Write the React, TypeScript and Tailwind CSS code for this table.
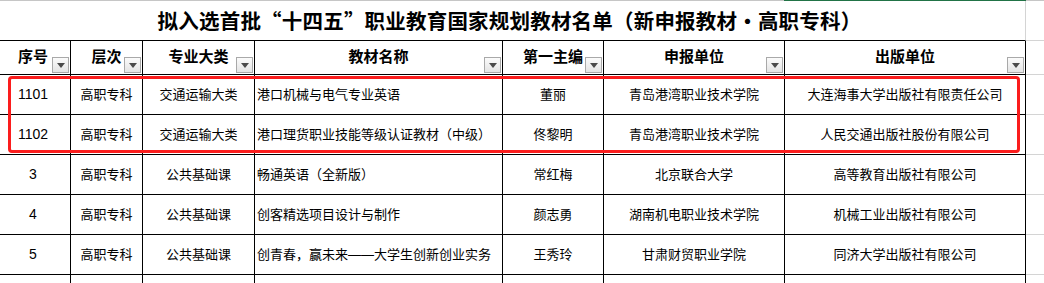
import React from "react";

const COLS = "grid-cols-[70px_72px_112px_248px_101px_181px_242px_1fr]";

const headers = ["序号", "层次", "专业大类", "教材名称", "第一主编", "申报单位", "出版单位"];

const rows: string[][] = [
  ["1101", "高职专科", "交通运输大类", "港口机械与电气专业英语", "董丽", "青岛港湾职业技术学院", "大连海事大学出版社有限责任公司"],
  ["1102", "高职专科", "交通运输大类", "港口理货职业技能等级认证教材（中级）", "佟黎明", "青岛港湾职业技术学院", "人民交通出版社股份有限公司"],
  ["3", "高职专科", "公共基础课", "畅通英语（全新版）", "常红梅", "北京联合大学", "高等教育出版社有限公司"],
  ["4", "高职专科", "公共基础课", "创客精选项目设计与制作", "颜志勇", "湖南机电职业技术学院", "机械工业出版社有限公司"],
  ["5", "高职专科", "公共基础课", "创青春，赢未来——大学生创新创业实务", "王秀玲", "甘肃财贸职业学院", "同济大学出版社有限公司"],
  ["", "", "", "", "", "", ""],
];

function FilterButton() {
  return (
    <span className="absolute right-[1px] bottom-[1px] flex h-[16px] w-[17px] items-center justify-center border border-[#a9a9a9] bg-gradient-to-b from-[#fbfbfb] to-[#e4e4e4]">
      <svg width="8" height="5" viewBox="0 0 8 5">
        <path d="M0 0h8L4 5z" fill="#4a4a4a" />
      </svg>
    </span>
  );
}

function cellClass(i: number) {
  const border = i === 0 ? "" : "border-l border-black";
  const last = i === 6 ? " border-r" : "";
  return `${border}${last}`;
}

export default function App() {
  return (
    <div
      lang="zh-CN"
      className="relative h-[283px] w-[1044px] overflow-hidden bg-white text-black"
      style={{ fontFamily: '"Liberation Sans", "Noto Sans CJK SC", sans-serif' }}
    >
      {/* title row */}
      <div className="flex h-[41px] border-t border-[#c6c6c6]">
        <div className="relative flex w-[1026px] items-center justify-center border-r border-b border-r-[#d4d4d4] border-b-black pr-[6px]">
          <div className="absolute top-[-1px] left-[784px] h-[1px] w-[242px] bg-[#217346]" />
          <span
            className="text-[20.5px] font-bold tracking-[0.2px]"
            style={{ fontFamily: '"Noto Sans CJK SC", serif' }}
          >
            拟入选首批“十四五”职业教育国家规划教材名单（新申报教材·高职专科）
          </span>
        </div>
        <div className="flex-1 border-b border-[#d4d4d4]" />
      </div>

      {/* header row */}
      <div className={`grid h-[34px] ${COLS}`}>
        {headers.map((h, i) => (
          <div
            key={h}
            className={`relative flex items-center justify-center border-b border-black text-[15px] font-bold ${cellClass(i)} ${i === 0 ? "pr-[4px]" : ""}`}
          >
            {h}
            <FilterButton />
          </div>
        ))}
        <div className="border-b border-[#d4d4d4]" />
      </div>

      {/* body rows */}
      {rows.map((r, ri) => (
        <div key={ri} className={`grid h-[40px] ${COLS}`}>
          {r.map((c, i) => (
            <div
              key={i}
              className={`flex items-center whitespace-nowrap border-b border-black text-[13px] ${cellClass(i)} ${
                i === 3 ? "justify-start pl-[2px]" : "justify-center"
              } ${i === 0 ? "pr-[4px] text-[14px]" : ""}`}
            >
              {c}
            </div>
          ))}
          <div className="border-b border-[#d4d4d4]" />
        </div>
      ))}

      {/* highlight box */}
      <div className="absolute top-[76px] left-[8px] h-[77px] w-[1012px] rounded-[4px] border-[3px] border-[#fb1d1d]" />
    </div>
  );
}
